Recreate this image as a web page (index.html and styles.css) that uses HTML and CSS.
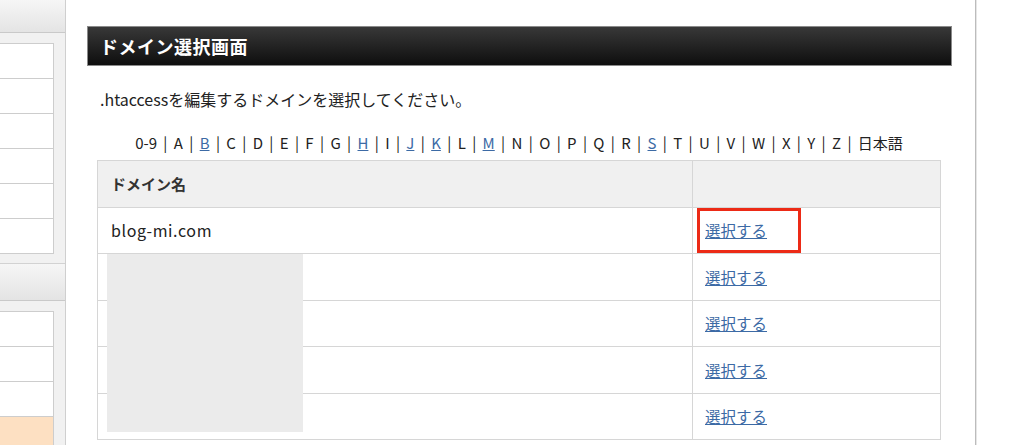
FILE: index.html
```html
<!DOCTYPE html>
<html lang="ja">
<head>
<meta charset="utf-8">
<title>ドメイン選択画面</title>
<link rel="stylesheet" href="styles.css">
</head>
<body>
<div class="page">
  <aside class="sidebar">
    <div class="side-head"></div>
    <ul class="side-list">
      <li></li><li></li><li></li><li></li><li></li><li></li>
    </ul>
    <div class="side-head second"></div>
    <ul class="side-list">
      <li></li><li></li><li></li><li class="active"></li>
    </ul>
  </aside>
  <main class="main">
    <h1 class="title-bar">ドメイン選択画面</h1>
    <p class="lead">.htaccessを編集するドメインを選択してください。</p>
    <div class="table-wrap">
      <p class="alpha">0-9 | A | <a href="#">B</a> | C | D | E | F | G | <a href="#">H</a> | I | <a href="#">J</a> | <a href="#">K</a> | L | <a href="#">M</a> | N | O | P | Q | R | <a href="#">S</a> | T | U | V | W | X | Y | Z | 日本語</p>
      <table class="domains">
        <tr class="head"><th class="c1">ドメイン名</th><th class="c2"></th></tr>
        <tr><td class="c1 name">blog-mi.com</td><td class="c2 marked"><a href="#">選択する</a><span class="highlight"></span></td></tr>
        <tr><td class="c1"></td><td class="c2"><a href="#">選択する</a></td></tr>
        <tr><td class="c1"></td><td class="c2"><a href="#">選択する</a></td></tr>
        <tr><td class="c1"></td><td class="c2"><a href="#">選択する</a></td></tr>
        <tr><td class="c1"></td><td class="c2"><a href="#">選択する</a></td></tr>
      </table>
      <div class="mask"></div>
    </div>
  </main>
  <div class="rest"></div>
</div>
</body>
</html>
```
FILE: styles.css
```css
html, body {
  margin: 0;
  padding: 0;
  background: #fff;
}
body {
  width: 1024px;
  height: 445px;
  overflow: hidden;
  font-family: "Noto Sans CJK JP", "Noto Sans", sans-serif;
  color: #222;
  font-size: 15px;
}
.page {
  display: flex;
  height: 445px;
}
.sidebar {
  width: 65px;
  flex: none;
  background: #f1f1f1;
  border-right: 1px solid #cfcfcf;
}
.side-head {
  height: 32px;
  background: linear-gradient(#f6f6f6, #e4e4e4);
  border-bottom: 1px solid #c9c9c9;
  margin-bottom: 10px;
}
.side-head.second {
  height: 36px;
  border-top: 1px solid #d2d2d2;
  margin-top: 9px;
}
.side-list {
  list-style: none;
  margin: 0;
  padding: 0;
  width: 54px;
  border-top: 1px solid #cdcdcd;
  border-right: 1px solid #cdcdcd;
  box-sizing: border-box;
}
.side-list li {
  height: 34px;
  background: #fff;
  border-bottom: 1px solid #cdcdcd;
}
.side-list li.active {
  background: #fde0c2;
  height: 40px;
}
.main {
  width: 910px;
  flex: none;
  border-right: 1px solid #bcbcbc;
  box-shadow: 1px 0 0 #e6e6e6;
  padding: 26px 23px 0 21px;
  box-sizing: border-box;
}
.title-bar {
  margin: 0;
  height: 40px;
  box-sizing: border-box;
  border: 1px solid #8a8a8a;
  background: linear-gradient(#383838, #0e0e0e);
  color: #fff;
  font-size: 18px;
  font-weight: bold;
  line-height: 38px;
  padding-left: 12px;
  letter-spacing: 0.5px;
}
.lead {
  margin: 22px 0 0 13px;
  font-size: 16px;
  line-height: 22px;
  color: #222;
}
.table-wrap {
  position: relative;
  margin: 0 11px 0 10px;
}
.alpha {
  margin: 23px 0 0;
  text-align: center;
  font-size: 15px;
  line-height: 20px;
  color: #222;
  word-spacing: 3px;
  padding-bottom: 7px;
}
.alpha a {
  color: #3c6aa5;
  text-decoration: underline;
}
.domains {
  width: 100%;
  border-collapse: collapse;
  border: 1px solid #d3d3d3;
  margin-top: 0;
}
.domains th, .domains td {
  border: 1px solid #d6d6d6;
  height: 46.5px;
  padding: 0 0 0 13px;
  text-align: left;
  box-sizing: border-box;
  font-size: 15px;
}
.domains th {
  background: #f0f0f0;
  font-weight: bold;
  color: #333;
}
.domains .c1 { width: 595px; }
.domains td.name {
  font-size: 16px;
  letter-spacing: 0.6px;
}
.domains td a {
  color: #3c6aa5;
  text-decoration: underline;
  font-size: 15.5px;
}
.domains td.c2 { padding-left: 12px; }
.marked { position: relative; }
.highlight {
  position: absolute;
  left: 4px;
  top: 0;
  width: 104px;
  height: 45px;
  border: 3px solid #ec2a16;
  box-sizing: border-box;
}
.mask {
  position: absolute;
  left: 10px;
  top: 121px;
  width: 196px;
  height: 178px;
  background: #ebebeb;
}
.rest { flex: 1; }
```
